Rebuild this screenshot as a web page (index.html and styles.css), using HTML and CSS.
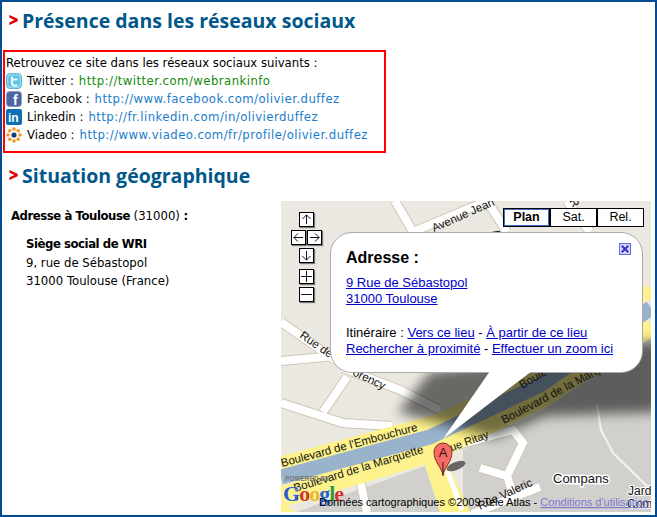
FILE: index.html
```html
<!DOCTYPE html>
<html lang="fr">
<head>
    <meta charset="UTF-8">
    <title>Présence dans les réseaux sociaux</title>
    <link rel="stylesheet" href="styles.css">
</head>
<body>
<div class="page">
    <h2 class="title">
        <svg class="chevron" viewBox="0 0 10 12"><polygon points="0,0 10,4.5 10,7.5 0,12 0,9 6,6 0,3"/></svg>
        Présence dans les réseaux sociaux
    </h2>

    <div class="social-box">
        <p class="social-row">Retrouvez ce site dans les réseaux sociaux suivants :</p>
        <p class="social-row">
            <svg class="icon" viewBox="0 0 16 16">
                <rect x="0.5" y="0.5" width="15" height="15" rx="3.5" fill="#8fd8ee" stroke="#5fb4d4"/>
                <rect x="2.5" y="2.5" width="11" height="11" rx="2.5" fill="#5cc0e2"/>
                <path d="M6 3.5v6.5q0 2.5 2.5 2.5h3M6 6.5h5.5" fill="none" stroke="#e8f8fd" stroke-width="2.2"/>
            </svg>
            <span class="social-name">Twitter :</span>
            <a class="link-green" href="#">http://twitter.com/webrankinfo</a>
        </p>
        <p class="social-row">
            <svg class="icon" viewBox="0 0 16 16">
                <rect x="0.5" y="0.5" width="15" height="15" rx="3" fill="#4a66a0" stroke="#8c9cc4"/>
                <text x="7" y="14" class="icon-f">f</text>
            </svg>
            <span>Facebook :</span>
            <a href="#">http://www.facebook.com/olivier.duffez</a>
        </p>
        <p class="social-row">
            <svg class="icon" viewBox="0 0 16 16">
                <rect x="0" y="0" width="16" height="16" rx="2" fill="#0a6fb3"/>
                <text x="2" y="13" class="icon-in">in</text>
            </svg>
            <span>Linkedin :</span>
            <a href="#">http://fr.linkedin.com/in/olivierduffez</a>
        </p>
        <p class="social-row">
            <svg class="icon" viewBox="0 0 16 16">
                <g fill="#f7941e">
                    <circle cx="8" cy="2" r="1.8"/><circle cx="12.2" cy="3.8" r="1.8"/>
                    <circle cx="14" cy="8" r="1.8"/><circle cx="12.2" cy="12.2" r="1.8"/>
                    <circle cx="8" cy="14" r="1.8"/><circle cx="3.8" cy="12.2" r="1.8"/>
                    <circle cx="2" cy="8" r="1.8"/><circle cx="3.8" cy="3.8" r="1.8"/>
                </g>
                <circle cx="8" cy="8" r="2.6" fill="#123f73"/>
            </svg>
            <span>Viadeo :</span>
            <a href="#">http://www.viadeo.com/fr/profile/olivier.duffez</a>
        </p>
    </div>

    <h2 class="title title-second">
        <svg class="chevron" viewBox="0 0 10 12"><polygon points="0,0 10,4.5 10,7.5 0,12 0,9 6,6 0,3"/></svg>
        Situation géographique
    </h2>

    <div class="location">
        <div class="address">
            <p class="address-head"><strong>Adresse à Toulouse</strong> (31000) <strong>:</strong></p>
            <div class="address-body">
                <strong class="address-name">Siège social de WRI</strong>
                <span>9, rue de Sébastopol</span>
                <span>31000 Toulouse (France)</span>
            </div>
        </div>

        <div class="map">
            <svg class="map-bg" viewBox="281 201 370 311">
                <defs>
                    <filter id="blur"><feGaussianBlur stdDeviation="6"/></filter>
                </defs>
                <rect x="281" y="201" width="370" height="311" fill="#ebe8e1"/>

                <!-- lots under the boulevard -->
                <polygon points="463,450 540,412 651,338 651,512 463,512" fill="#d1d0cc"/>
                <polygon points="296,512 425,466 440,512" fill="#d1d0cc"/>

                <!-- small roads -->
                <g class="road-case">
                    <polyline points="395,201 413,232 487,201 507,232"/>
                    <polyline points="567,201 590,232"/>
                    <polyline points="281,322 335,360"/>
                    <polyline points="281,361 335,356"/>
                    <polyline points="343,368 400,390 440,410"/>
                    <polyline points="281,403 343,423 392,426"/>
                    <polyline points="323,412 347,377"/>
                    <polyline points="360,480 367,512"/>
                    <polyline points="447,448 513,430 523,443 507,476 480,468"/>
                    <polyline points="507,476 514,497 540,487"/>
                    <polyline points="514,497 472,514"/>
                </g>
                <g class="road-fill">
                    <polyline points="395,201 413,232 487,201 507,232"/>
                    <polyline points="567,201 590,232"/>
                    <polyline points="281,322 335,360"/>
                    <polyline points="281,361 335,356"/>
                    <polyline points="343,368 400,390 440,410"/>
                    <polyline points="281,403 343,423 392,426"/>
                    <polyline points="323,412 347,377"/>
                    <polyline points="360,480 367,512"/>
                    <polyline points="447,448 513,430 523,443 507,476 480,468"/>
                    <polyline points="507,476 514,497 540,487"/>
                    <polyline points="514,497 472,514"/>
                </g>
                <polyline points="597,405 601,430 613,453 651,490" fill="none" stroke="#f4f3f0" stroke-width="2"/>

                <!-- boulevards and canal -->
                <polygon points="423,458 447,462 470,512 440,512" fill="#fdf28c"/>
                <polyline points="447,470 462,510" fill="none" stroke="#fff" stroke-width="5"/>
                <polygon points="281,503 296,512 281,512" fill="#fdf28c"/>
                <polyline class="road-yellow" points="281,463 440,420 540,372 651,290" stroke-width="13"/>
                <polyline class="road-yellow" points="281,497 430,452 540,398 651,325" stroke-width="21"/>
                <polyline class="road-canal" points="281,477 430,437 540,385 651,308" stroke-width="15"/>

                <!-- window shadow -->
                <polygon class="map-shadow" points="398,412 430,372 660,340 660,412 545,416 495,438" filter="url(#blur)"/>

                <!-- street names -->
                <g class="map-label">
                    <text transform="translate(434 232) rotate(-24)">Avenue Jean</text>
                    <text transform="translate(491 232) rotate(60)">A</text>
                    <text transform="translate(569 201) rotate(60)">R</text>
                    <text transform="translate(299 337) rotate(35)">Rue de M</text>
                    <text transform="translate(352 375) rotate(25)">orency</text>
                    <text transform="translate(282 467) rotate(-15)">Boulevard de l'Embouchure</text>
                    <text transform="translate(295 492) rotate(-17)">Boulevard de la Marquette</text>
                    <text transform="translate(504 424) rotate(-28)">Boulevard de la Marquette</text>
                    <text transform="translate(522 389) rotate(-30)">Boulevard</text>
                    <text class="map-street" transform="translate(444 454) rotate(-20)">Rue Ritay</text>
                    <text transform="translate(480 510) rotate(-25)">Rue Valeric</text>
                    <text class="map-place" x="553" y="483">Compans</text>
                    <text class="map-small" x="628" y="495">Jard</text>
                    <text class="map-small" x="627" y="508">Com</text>
                </g>

                <!-- pin -->
                <ellipse cx="456" cy="466" rx="10" ry="4" fill="#3c3c3c" opacity="0.75" transform="rotate(-22 456 466)"/>
                <path d="M443 475c-1-7-9-13-9-23a9 9 0 0 1 18 0c0 10-8 16-9 23z" fill="#f56b63" stroke="#8a2b25"/>
                <line x1="443" y1="462" x2="443" y2="476" stroke="#3a1a18"/>
                <text class="pin-letter" x="443" y="457">A</text>

                <!-- powered by -->
                <text class="powered" x="285" y="481">POWERED BY</text>
                <text class="google" x="283" y="501"><tspan fill="#2a5fc4">G</tspan><tspan fill="#d8321f">o</tspan><tspan fill="#e8b818">o</tspan><tspan fill="#2a5fc4">g</tspan><tspan fill="#2f9a3a">l</tspan><tspan fill="#d8321f">e</tspan></text>
                <text class="map-copy" x="319" y="506">Données cartographiques ©2009 Tele Atlas - <tspan fill="#7a78d0" text-decoration="underline">Conditions d'utilisation</tspan></text>
            </svg>

            <div class="pan-zoom">
                <button class="map-btn"><svg viewBox="0 0 12 12"><path d="M6 11V1M1.500 5.500L6 1l4.500 4.500"/></svg></button>
                <div class="pan-row">
                    <button class="map-btn"><svg viewBox="0 0 12 12"><path d="M11 6H1M5.500 1.500L1 6l4.500 4.500"/></svg></button>
                    <button class="map-btn"><svg viewBox="0 0 12 12"><path d="M1 6h10M6.500 1.500L11 6l-4.500 4.500"/></svg></button>
                </div>
                <button class="map-btn"><svg viewBox="0 0 12 12"><path d="M6 1v10M1.500 6.500L6 11l4.500-4.500"/></svg></button>
                <button class="map-btn zoom-in"><svg viewBox="0 0 12 12"><path d="M0 6h12M6 0v12"/></svg></button>
                <button class="map-btn"><svg viewBox="0 0 12 12"><path d="M0 6h12"/></svg></button>
            </div>

            <div class="map-types">
                <span class="map-type map-type-on">Plan</span>
                <span class="map-type">Sat.</span>
                <span class="map-type">Rel.</span>
            </div>

            <div class="bubble">
                <svg class="bubble-close" viewBox="0 0 11 11">
                    <rect x="0.500" y="0.500" width="10" height="10" fill="#dfe4fb" stroke="#6a6ae0"/>
                    <path d="M2.500 2.500l6 6M8.500 2.500l-6 6" stroke="#3434c8" stroke-width="2"/>
                </svg>
                <h3 class="bubble-title">Adresse :</h3>
                <p class="bubble-text"><a href="#">9 Rue de Sébastopol</a><br><a href="#">31000 Toulouse</a></p>
                <p class="bubble-text">Itinéraire : <a href="#">Vers ce lieu</a> - <a href="#">À partir de ce lieu</a><br><a href="#">Rechercher à proximité</a> - <a href="#">Effectuer un zoom ici</a></p>
            </div>

            <svg class="bubble-tail" viewBox="0 0 90 70"><polygon points="47,0 89,0 0,68" fill="#fff"/></svg>
        </div>
    </div>
</div>
</body>
</html>
```

FILE: styles.css
```css
html, body {
    margin: 0;
    padding: 0;
}

body {
    background-color: #fff;
    color: #000;
    font-family: "DejaVu Sans", sans-serif;
    font-size: 11.7px;
}

.page {
    box-sizing: border-box;
    width: 657px;
    height: 517px;
    overflow: hidden;
    border: 2px solid #004b93;
    padding: 0 4px 3px 1px;
}

.title {
    display: flex;
    align-items: center;
    gap: 4px;
    margin: 5px 0 0 6px;
    height: 26px;
    color: #00578a;
    font-family: "Open Sans", sans-serif;
    font-size: 19.5px;
    font-weight: 700;
    white-space: nowrap;
}

.title-second {
    margin-top: 9px;
}

.chevron {
    width: 9px;
    height: 10px;
    flex: none;
    fill: #dd0000;
}

.social-box {
    width: 383px;
    height: 103px;
    box-sizing: border-box;
    margin-top: 17px;
    padding: 2px 0 0 1px;
    border: 2px solid #f00;
}

.social-row {
    display: flex;
    align-items: center;
    gap: 5px;
    height: 18px;
    margin: 0;
    white-space: nowrap;
}

.icon {
    width: 16px;
    height: 16px;
    flex: none;
}

.icon-f {
    fill: #fff;
    font-family: "Liberation Sans", sans-serif;
    font-size: 14px;
    font-weight: 700;
}

.icon-in {
    fill: #fff;
    font-family: "Liberation Sans", sans-serif;
    font-size: 12px;
    font-weight: 700;
}

a {
    color: #1a7ccb;
    text-decoration: none;
}

.social-row a {
    letter-spacing: 0.45px;
}

.link-green {
    color: #158a0e;
}

.location {
    display: flex;
    margin-top: 13px;
}

.address {
    width: 278px;
    flex: none;
    padding: 6px 0 0 8px;
    box-sizing: border-box;
}

.address-head {
    margin: 0;
    line-height: 18px;
}

.address strong {
    letter-spacing: -0.45px;
}

.address-body {
    display: flex;
    flex-direction: column;
    margin-top: 10px;
    padding-left: 15px;
    line-height: 18px;
}

.address-name {
    margin-bottom: 1px;
}

.map {
    position: relative;
    width: 370px;
    height: 311px;
    flex: none;
    overflow: hidden;
}

.map-bg {
    display: block;
    width: 370px;
    height: 311px;
}

.road-case polyline {
    fill: none;
    stroke: #cfc6b6;
    stroke-width: 10;
}

.road-fill polyline {
    fill: none;
    stroke: #fff;
    stroke-width: 8;
}

.road-yellow {
    fill: none;
    stroke: #fdf28c;
}

.road-canal {
    fill: none;
    stroke: #99b3cc;
}

.map-shadow {
    fill: #000;
    opacity: 0.55;
}

.map-label text {
    fill: #111;
    font-family: "Liberation Sans", sans-serif;
    font-size: 11.5px;
}

.map-label .map-street {
    font-size: 11px;
}

.map-label .map-place {
    font-size: 13px;
    stroke: #fff;
    stroke-width: 3px;
    paint-order: stroke;
}

.map-label .map-small {
    font-size: 12px;
    stroke: #fff;
    stroke-width: 2px;
    paint-order: stroke;
}

.pin-letter {
    fill: #3a1210;
    font-family: "Liberation Sans", sans-serif;
    font-size: 13px;
    text-anchor: middle;
}

.powered {
    fill: #777;
    font-family: "Liberation Sans", sans-serif;
    font-size: 6.5px;
    font-weight: 700;
}

.google {
    font-family: "Liberation Serif", serif;
    font-size: 22px;
    font-weight: 700;
    letter-spacing: -1px;
    stroke: #fff;
    stroke-width: 0.5px;
    paint-order: stroke;
}

.map-copy {
    fill: #000;
    font-family: "Liberation Sans", sans-serif;
    font-size: 11px;
}

.pan-zoom {
    position: absolute;
    left: 10px;
    top: 11px;
    width: 31px;
    display: flex;
    flex-direction: column;
    align-items: center;
    gap: 3px;
}

.pan-row {
    display: flex;
    gap: 1px;
}

.map-btn {
    display: block;
    box-sizing: border-box;
    width: 15px;
    height: 15px;
    padding: 1px;
    background-color: #fff;
    border: 1px solid #000;
    box-shadow: 1px 1px 1px #777;
}

.map-btn svg {
    display: block;
    width: 11px;
    height: 11px;
    fill: none;
    stroke: #000;
    stroke-width: 1;
}

.zoom-in {
    margin-top: 3px;
}

.map-types {
    position: absolute;
    right: 7px;
    top: 7px;
    display: flex;
    font-family: "Liberation Sans", sans-serif;
    font-size: 12.5px;
}

.map-type {
    box-sizing: border-box;
    width: 47px;
    height: 19px;
    background-color: #fff;
    border: 1px solid #000;
    line-height: 17px;
    text-align: center;
}

.map-type-on {
    font-weight: 700;
    box-shadow: inset 0 0 0 1px #3a6fc0;
}

.bubble {
    position: absolute;
    left: 49px;
    top: 31px;
    box-sizing: border-box;
    width: 313px;
    height: 141px;
    padding: 15px 15px 0;
    background-color: #fff;
    border: 1px solid #aaa;
    border-radius: 22px;
    font-family: "Liberation Sans", sans-serif;
    font-size: 13px;
    line-height: 16px;
}

.bubble-tail {
    position: absolute;
    left: 162px;
    top: 170px;
    width: 90px;
    height: 70px;
}

.bubble a {
    color: #00c;
    text-decoration: underline;
}

.bubble-close {
    position: absolute;
    right: 11px;
    top: 10px;
    width: 12px;
    height: 12px;
}

.bubble-title {
    margin: 0 0 7px;
    font-size: 16px;
    line-height: 20px;
}

.bubble-text {
    margin: 0 0 18px;
}
```
